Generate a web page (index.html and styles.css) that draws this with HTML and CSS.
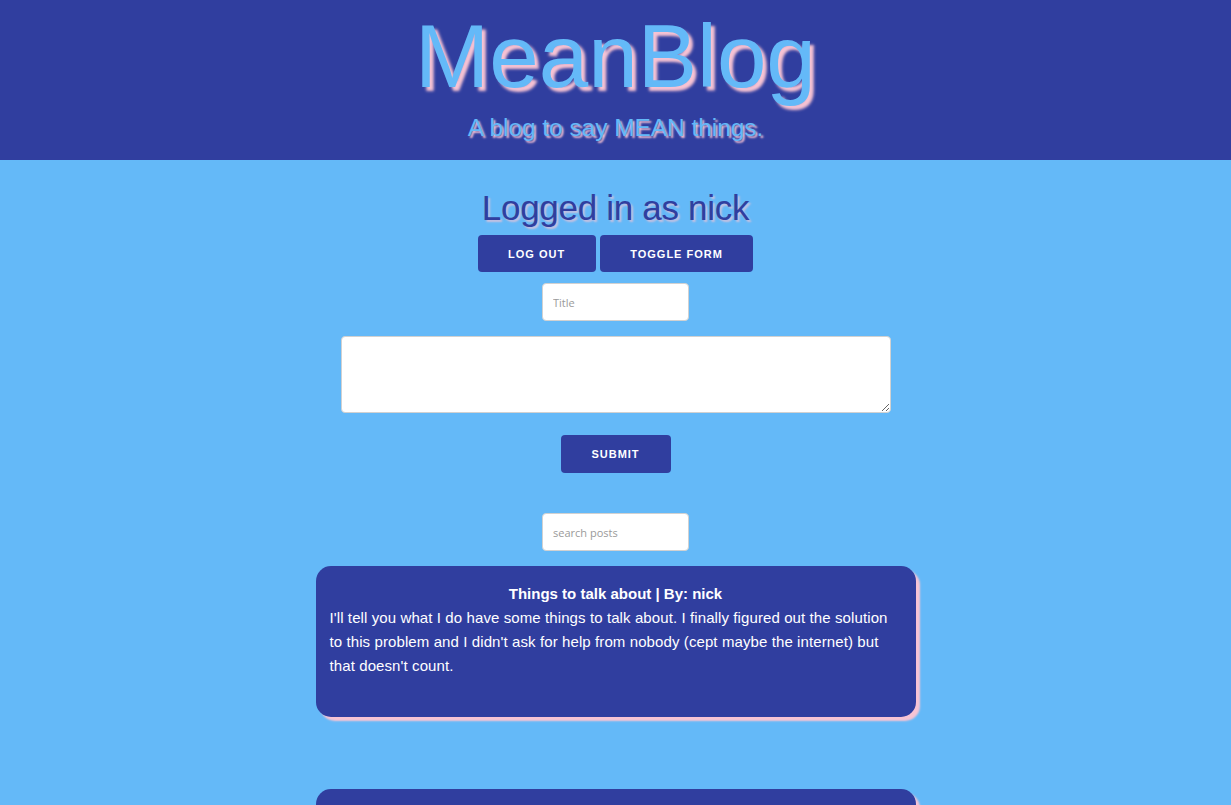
FILE: index.html
```html
<!DOCTYPE html>
<html>
<head>
<meta charset="utf-8">
<title>MeanBlog</title>
<link rel="stylesheet" href="styles.css">
</head>
<body>
<header class="site-header">
  <h1 class="site-title">MeanBlog</h1>
  <p class="site-tagline">A blog to say MEAN things.</p>
</header>
<main class="main">
  <h2 class="status">Logged in as nick</h2>
  <div class="actions">
    <button class="btn">Log Out</button>
    <button class="btn">Toggle Form</button>
  </div>
  <form class="post-form">
    <input class="field field-title" type="text" placeholder="Title">
    <textarea class="field field-body"></textarea>
    <button class="btn btn-submit" type="button">Submit</button>
  </form>
  <input class="field field-search" type="text" placeholder="search posts">
  <section class="posts">
    <article class="post">
      <h3 class="post-title">Things to talk about | By: nick</h3>
      <p class="post-body">I'll tell you what I do have some things to talk about. I finally figured out the solution to this problem and I didn't ask for help from nobody (cept maybe the internet) but that doesn't count.</p>
    </article>
    <article class="post post-next"></article>
  </section>
</main>
</body>
</html>
```

FILE: styles.css
```css
html, body {
  margin: 0;
  padding: 0;
}
body {
  background: #64b9f8;
  font-family: "Liberation Sans", Arial, Helvetica, sans-serif;
  color: #fff;
}
.site-header {
  background: #303e9f;
  height: 160px;
  box-sizing: border-box;
  padding-top: 6px;
  text-align: center;
}
.site-title {
  margin: 0;
  font-size: 89px;
  font-weight: normal;
  line-height: 1.13;
  color: #64b9f8;
  text-shadow: 4px 4px 3px #f8c4d4;
}
.site-tagline {
  margin: 7px 0 0;
  font-size: 24.4px;
  line-height: 1.13;
  color: #64b9f8;
  text-shadow: 2px 2px 2px #f8c4d4;
}
.main {
  display: flex;
  flex-direction: column;
  align-items: center;
}
.status {
  margin: 28px 0 0;
  font-size: 35px;
  font-weight: normal;
  line-height: 40px;
  letter-spacing: -0.3px;
  color: #303e9f;
  text-shadow: 2px 2px 2px rgba(248, 196, 212, 0.7);
}
.actions {
  display: flex;
  gap: 4px;
  margin-top: 7px;
}
.btn {
  height: 37px;
  padding: 0 30px;
  border: none;
  border-radius: 4px;
  background: #303e9f;
  color: #fff;
  font-family: "Liberation Sans", Arial, sans-serif;
  font-size: 11px;
  font-weight: bold;
  letter-spacing: 1px;
  text-transform: uppercase;
  cursor: pointer;
}
.actions .btn:first-child {
  padding: 0 31px 0 30px;
}
.post-form {
  display: flex;
  flex-direction: column;
  align-items: center;
  margin: 0;
}
.field {
  box-sizing: border-box;
  background: #fff;
  border: 1px solid #d1d1d1;
  border-radius: 4px;
  padding: 6px 10px;
  font-family: "Open Sans", "Liberation Sans", sans-serif;
  font-size: 11px;
  color: #333;
}
.field::placeholder {
  color: #9a9a9a;
}
.field-title {
  width: 147px;
  height: 38px;
  margin-top: 11px;
}
.field-body {
  width: 550px;
  height: 77px;
  margin-top: 15px;
  resize: both;
}
.btn-submit {
  height: 38px;
  margin-top: 22px;
  width: 110px;
  padding: 0;
}
.field-search {
  width: 147px;
  height: 38px;
  margin-top: 40px;
}
.posts {
  display: flex;
  flex-direction: column;
  gap: 72px;
  margin-top: 15px;
}
.post {
  box-sizing: border-box;
  width: 600px;
  min-height: 151px;
  padding: 16px 14px 30px;
  background: #303e9f;
  border-radius: 15px;
  box-shadow: 4px 4px 2px #f8c4d4;
  color: #fff;
}
.post-title {
  margin: 0;
  text-align: center;
  font-size: 15px;
  line-height: 24px;
  font-weight: bold;
}
.post-body {
  margin: 0;
  font-size: 15px;
  line-height: 24px;
  letter-spacing: 0.1px;
}
```
